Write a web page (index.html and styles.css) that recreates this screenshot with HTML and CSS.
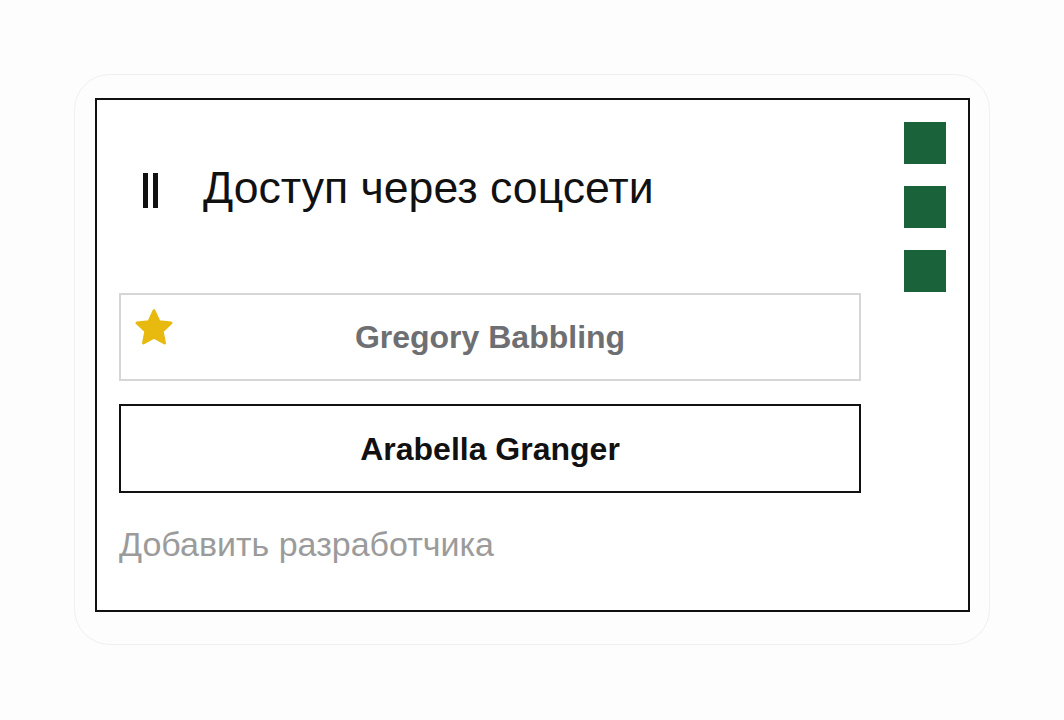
FILE: index.html
```html
<!DOCTYPE html>
<html lang="ru">
<head>
<meta charset="utf-8">
<title>Доступ через соцсети</title>
<link rel="stylesheet" href="styles.css">
</head>
<body>
<div class="frame">
  <div class="panel">
    <div class="main">
      <div class="heading">
        <span class="handle" aria-hidden="true"><span class="bar"></span><span class="bar"></span></span>
        <h1 class="title">Доступ через соцсети</h1>
      </div>
      <div class="card card-muted">
        <svg class="star" viewBox="1.2 1.4 21.6 20.2" width="38" height="36" aria-hidden="true">
          <path d="M12 2.2l2.9 6.2 6.8.8-5 4.7 1.3 6.7L12 17.3l-6 3.3 1.3-6.7-5-4.7 6.8-.8z" fill="#e8b90f" stroke="#e8b90f" stroke-width="1.6" stroke-linejoin="round"/>
        </svg>
        <span class="name name-muted">Gregory Babbling</span>
      </div>
      <div class="card card-active">
        <span class="name">Arabella Granger</span>
      </div>
      <div class="add">Добавить разработчика</div>
    </div>
    <div class="side">
      <div class="sq"></div>
      <div class="sq"></div>
      <div class="sq"></div>
    </div>
  </div>
</div>
</body>
</html>
```
FILE: styles.css
```css
html, body {
  margin: 0;
  padding: 0;
}
body {
  background: #fdfdfd;
  font-family: "Liberation Sans", Arial, sans-serif;
  width: 1064px;
  height: 720px;
  overflow: hidden;
}
.frame {
  box-sizing: border-box;
  margin: 74px 0 0 74px;
  width: 916px;
  height: 571px;
  border: 1px solid #f0f0f0;
  border-radius: 36px;
  padding: 23px 0 0 20px;
}
.panel {
  box-sizing: border-box;
  width: 875px;
  height: 514px;
  border: 2px solid #111;
  background: #fff;
  padding: 22px;
  display: flex;
  justify-content: space-between;
}
.main {
  width: 742px;
  display: flex;
  flex-direction: column;
}
.heading {
  height: 132px;
  display: flex;
  align-items: center;
  padding-left: 24px;
  margin-bottom: 39px;
}
.handle {
  display: flex;
  gap: 5px;
  width: 60px;
  padding-top: 4px;
}
.bar {
  width: 5px;
  height: 35px;
  background: #111;
}
.title {
  margin: 0;
  font-size: 44.6px;
  line-height: 50px;
  font-weight: normal;
  color: #111;
}
.card {
  box-sizing: border-box;
  position: relative;
  height: 88px;
  display: flex;
  align-items: center;
  justify-content: center;
}
.card-muted {
  border: 2px solid #d6d6d6;
}
.card-active {
  border: 2px solid #111;
  margin-top: 23px;
  height: 89px;
}
.star {
  position: absolute;
  left: 14px;
  top: 14px;
}
.name {
  font-size: 32px;
  line-height: 38px;
  font-weight: bold;
  color: #111;
}
.name-muted {
  color: #6e6f72;
}
.add {
  margin-top: 31px;
  font-size: 34px;
  line-height: 40px;
  color: #9b9b9b;
}
.side {
  display: flex;
  flex-direction: column;
  gap: 22px;
}
.sq {
  width: 42px;
  height: 42px;
  background: #1a623a;
}
```
